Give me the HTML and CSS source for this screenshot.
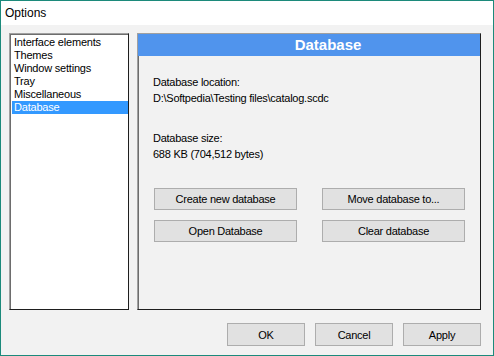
FILE: index.html
```html
<!DOCTYPE html>
<html lang="en">
<head>
  <meta charset="UTF-8">
  <title>Options</title>
  <link rel="stylesheet" href="styles.css">
</head>
<body>
  <div class="window">
    <div class="titlebar">Options</div>
    <div class="client">
      <div class="main">
        <ul class="listbox">
          <li>Interface elements</li>
          <li>Themes</li>
          <li>Window settings</li>
          <li>Tray</li>
          <li>Miscellaneous</li>
          <li class="selected">Database</li>
        </ul>
        <div class="panel">
          <div class="panel-header">Database</div>
          <div class="panel-body">
            <div class="field">
              <div>Database location:</div>
              <div>D:\Softpedia\Testing files\catalog.scdc</div>
            </div>
            <div class="field">
              <div>Database size:</div>
              <div>688 KB (704,512 bytes)</div>
            </div>
            <div class="actions">
              <button class="btn">Create new database</button>
              <button class="btn">Move database to...</button>
              <button class="btn">Open Database</button>
              <button class="btn">Clear database</button>
            </div>
          </div>
        </div>
      </div>
      <div class="footer">
        <button class="btn btn-dialog">OK</button>
        <button class="btn btn-dialog">Cancel</button>
        <button class="btn btn-dialog">Apply</button>
      </div>
    </div>
  </div>
</body>
</html>
```

FILE: styles.css
```css
* {
  margin: 0;
  padding: 0;
  box-sizing: border-box;
}
body {
  font-family: 'Liberation Sans', Arial, sans-serif;
  font-size: 11px;
  color: #000;
  background: #f2f2f2;
}
.window {
  width: 494px;
  height: 356px;
  border: 1px solid #1c8a7b;
  background: #f2f2f2;
  display: flex;
  flex-direction: column;
  overflow: hidden;
}
.titlebar {
  height: 24px;
  line-height: 25px;
  background: #fff;
  font-size: 12px;
  padding-left: 4px;
}
.client {
  flex: 1;
  padding: 8px 12px 0 8px;
  display: flex;
  flex-direction: column;
}
.main {
  display: flex;
  gap: 8px;
  height: 277px;
}
.listbox {
  list-style: none;
  width: 120px;
  background: #fff;
  border-top: 1px solid #a0a0a0;
  border-left: 1px solid #a0a0a0;
  border-right: 1px solid #1e1e1e;
  border-bottom: 1px solid #1e1e1e;
  box-shadow: inset 1px 1px 0 #6d6d6d;
  padding: 2px 0 0 2px;
  letter-spacing: -0.2px;
}
.listbox li {
  height: 13px;
  line-height: 13px;
  padding-left: 2px;
}
.listbox li.selected {
  background: #3399ff;
  color: #fff;
}
.panel {
  flex: 1;
  display: flex;
  flex-direction: column;
  border-top: 1px solid #a0a0a0;
  border-left: 1px solid #a0a0a0;
  border-right: 1px solid #1e1e1e;
  border-bottom: 1px solid #1e1e1e;
  box-shadow: inset 1px 0 0 #6d6d6d;
}
.panel-header {
  height: 22px;
  line-height: 22px;
  background: #5094ed;
  color: #fff;
  font-size: 15px;
  font-weight: 700;
  text-align: center;
  padding-left: 38px;
}
.panel-body {
  padding: 18px 15px 0 15px;
  letter-spacing: -0.25px;
}
.field {
  line-height: 16px;
  margin-bottom: 24px;
}
.actions {
  display: grid;
  grid-template-columns: 143px 143px;
  column-gap: 25px;
  row-gap: 10px;
  padding-left: 1px;
  margin-top: 26px;
}
.btn {
  height: 22px;
  background: #e1e1e1;
  border: 1px solid #adadad;
  font-family: inherit;
  font-size: 11px;
  letter-spacing: -0.25px;
  color: #000;
}
.footer {
  display: flex;
  justify-content: flex-end;
  gap: 10px;
  margin-top: 13px;
}
.btn-dialog {
  width: 78px;
  height: 23px;
}
```
